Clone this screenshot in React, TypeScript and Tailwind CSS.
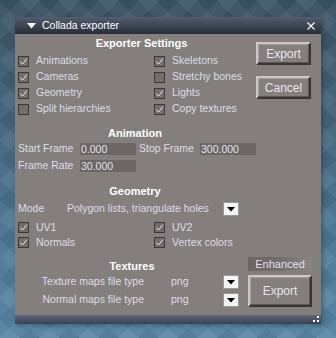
import React from "react";

const font = { fontFamily: '"Liberation Sans", Arial, sans-serif' };

function Check({ on }: { on: boolean }) {
  return (
    <span className="w-[11px] h-[11px] shrink-0 border border-[#3c3837] bg-[#736d6b] flex items-center justify-center">
      {on && (
        <svg width="9" height="9" viewBox="0 0 9 9">
          <path d="M1 4.5 L3.5 7 L8 1.5" fill="none" stroke="#f4f4f8" strokeWidth="0.9" />
        </svg>
      )}
    </span>
  );
}

function Option({ on, label }: { on: boolean; label: string }) {
  return (
    <div className="flex items-center gap-[7px] text-[#dedde8] text-[10.5px]">
      <Check on={on} />
      <span>{label}</span>
    </div>
  );
}

function Heading({ children, className }: { children: React.ReactNode; className: string }) {
  return (
    <div className={`text-center font-bold text-[11px] leading-[14px] h-[14px] text-white ${className}`}>
      {children}
    </div>
  );
}

function Button({ label, className }: { label: string; className: string }) {
  return (
    <div
      className={`border-2 border-t-[#cdc7c5] border-l-[#cdc7c5] border-r-[#3a3534] border-b-[#3a3534] bg-[#847e7c] flex items-center justify-center text-[12px] text-[#e8e6ee] shadow-[inset_-1px_-1px_0_#5c5654,inset_1px_1px_0_#a49e9c] ${className}`}
    >
      {label}
    </div>
  );
}

function Drop() {
  return (
    <div className="w-[16px] h-[14px] bg-[#f4f4f4] border border-[#9a9a9a] flex items-center justify-center">
      <svg width="8" height="5" viewBox="0 0 8 5">
        <path d="M0 0 H8 L4 4.5 Z" fill="#000" />
      </svg>
    </div>
  );
}

function Field({ value }: { value: string }) {
  return (
    <div className="w-[56px] h-[12px] bg-[#6c6664] text-[#e4e2ea] text-[10.5px] leading-[12px] pl-[1px]">
      {value}
    </div>
  );
}

export default function App() {
  return (
    <div
      className="w-[336px] h-[338px] pt-[17px] pl-[15px] overflow-hidden bg-[repeating-linear-gradient(45deg,rgba(255,255,255,0.035)_0_14px,rgba(0,0,0,0.035)_14px_28px),repeating-linear-gradient(-45deg,rgba(255,255,255,0.035)_0_14px,rgba(0,0,0,0.035)_14px_28px),linear-gradient(to_bottom,#3b5465,#476e88,#5888a8)]"
      style={font}
    >
      <div className="w-[306px] h-[307px] flex flex-col shadow-[2px_2px_4px_rgba(0,0,0,0.25)]">
        {/* title bar */}
        <div className="h-[17px] bg-gradient-to-b from-[#545d6d] to-[#282e3a] flex items-center pl-[12px] pr-[6px] text-white">
          <svg width="9" height="6" viewBox="0 0 9 6">
            <path d="M0 0 H9 L4.5 5.5 Z" fill="#fff" />
          </svg>
          <span className="ml-[6px] text-[10.5px] leading-[17px] flex-1">Collada exporter</span>
          <svg width="8" height="8" viewBox="0 0 8 8">
            <path d="M0.5 0.5 L7.5 7.5 M7.5 0.5 L0.5 7.5" stroke="#fff" strokeWidth="1.1" />
          </svg>
        </div>

        {/* body */}
        <div className="flex-1 bg-[#847e7c] flex flex-col">
          <div className="flex">
            <div className="w-[241px] flex flex-col">
              <Heading className="mt-[2px] w-[253px] text-[11.5px]">Exporter Settings</Heading>
              <div className="mt-[3px] pl-[3px] grid grid-cols-[136px_1fr] auto-rows-[16px]">
                <Option on label="Animations" />
                <Option on label="Skeletons" />
                <Option on label="Cameras" />
                <Option on={false} label="Stretchy bones" />
                <Option on label="Geometry" />
                <Option on label="Lights" />
                <Option on={false} label="Split hierarchies" />
                <Option on label="Copy textures" />
              </div>
            </div>
            <div className="flex flex-col pt-[8px]">
              <Button label="Export" className="w-[55px] h-[23px]" />
              <Button label="Cancel" className="w-[55px] h-[23px] mt-[11px]" />
            </div>
          </div>

          <Heading className="mt-[9px] w-[240px]">Animation</Heading>
          <div className="mt-[3px] h-[12px] flex items-center pl-[3px] text-[10.5px] text-[#dedde8]">
            <span className="w-[62px]">Start Frame</span>
            <Field value="0.000" />
            <span className="ml-[3px] w-[61px]">Stop Frame</span>
            <Field value="300.000" />
          </div>
          <div className="mt-[5px] h-[12px] flex items-center pl-[3px] text-[10.5px] text-[#dedde8]">
            <span className="w-[62px]">Frame Rate</span>
            <Field value="30.000" />
          </div>

          <Heading className="mt-[12px] w-[240px]">Geometry</Heading>
          <div className="mt-[4px] h-[14px] flex items-center pl-[3px] text-[10.5px] text-[#dedde8]">
            <span className="w-[49px]">Mode</span>
            <span className="w-[156px]">Polygon lists, triangulate holes</span>
            <Drop />
          </div>
          <div className="mt-[4px] pl-[3px] grid grid-cols-[136px_1fr] auto-rows-[15px]">
            <Option on label="UV1" />
            <Option on label="UV2" />
            <Option on label="Normals" />
            <Option on label="Vertex colors" />
          </div>

          <div className="mt-[7px] flex">
            <div className="w-[233px] flex flex-col text-[10.5px] text-[#dedde8]">
              <Heading className="mt-[2px] w-[234px]">Textures</Heading>
              <div className="mt-[2px] h-[14px] flex items-center">
                <span className="w-[129px] text-right">Texture maps file type</span>
                <span className="ml-[27px] w-[52px]">png</span>
                <Drop />
              </div>
              <div className="mt-[4px] h-[14px] flex items-center">
                <span className="w-[129px] text-right">Normal maps file type</span>
                <span className="ml-[27px] w-[52px]">png</span>
                <Drop />
              </div>
            </div>
            <div className="flex flex-col">
              <div className="w-[64px] h-[14px] bg-gradient-to-r from-[#6a6462] via-[#736d6b] to-[#8c8684] text-[#e2e0e8] text-[11px] leading-[14px] text-center">
                Enhanced
              </div>
              <Button label="Export" className="w-[64px] h-[32px] mt-[4px]" />
            </div>
          </div>
        </div>

        {/* bottom bar */}
        <div className="h-[9px] bg-gradient-to-b from-[#5f687b] to-[#3a4254] flex justify-end items-end pr-[1px] pb-[1px]">
          <svg width="7" height="7" viewBox="0 0 7 7">
            <rect x="4" y="0" width="2" height="2" fill="#fff" />
            <rect x="0" y="4" width="2" height="2" fill="#fff" />
            <rect x="4" y="4" width="2" height="2" fill="#fff" />
          </svg>
        </div>
      </div>
    </div>
  );
}
